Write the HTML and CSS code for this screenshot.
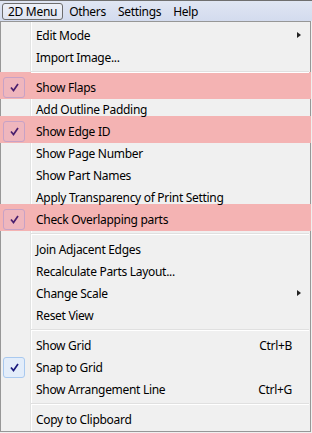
FILE: index.html
```html
<!DOCTYPE html>
<html lang="en">
<head>
    <meta charset="UTF-8">
    <title>2D Menu</title>
    <link rel="stylesheet" href="styles.css">
</head>
<body>
    <div class="menubar">
        <span class="top open">2D Menu</span>
        <span class="top">Others</span>
        <span class="top">Settings</span>
        <span class="top">Help</span>
    </div>
    <div class="popup">
        <div class="item"><span class="mark"></span><span class="label">Edit Mode</span><span class="arrow"></span></div>
        <div class="item"><span class="mark"></span><span class="label">Import Image...</span></div>
        <div class="sep"></div>
        <div class="item flag"><span class="mark box pink"><svg viewBox="0 0 9 9"><path d="M1 4.5 L3.5 7.5 L8 1"/></svg></span><span class="label">Show Flaps</span></div>
        <div class="item"><span class="mark"></span><span class="label">Add Outline Padding</span></div>
        <div class="item flag"><span class="mark box pink"><svg viewBox="0 0 9 9"><path d="M1 4.5 L3.5 7.5 L8 1"/></svg></span><span class="label">Show Edge ID</span></div>
        <div class="item"><span class="mark"></span><span class="label">Show Page Number</span></div>
        <div class="item"><span class="mark"></span><span class="label">Show Part Names</span></div>
        <div class="item"><span class="mark"></span><span class="label">Apply Transparency of Print Setting</span></div>
        <div class="item flag"><span class="mark box pink"><svg viewBox="0 0 9 9"><path d="M1 4.5 L3.5 7.5 L8 1"/></svg></span><span class="label">Check Overlapping parts</span></div>
        <div class="sep"></div>
        <div class="item"><span class="mark"></span><span class="label">Join Adjacent Edges</span></div>
        <div class="item"><span class="mark"></span><span class="label">Recalculate Parts Layout...</span></div>
        <div class="item"><span class="mark"></span><span class="label">Change Scale</span><span class="arrow"></span></div>
        <div class="item"><span class="mark"></span><span class="label">Reset View</span></div>
        <div class="sep"></div>
        <div class="item"><span class="mark"></span><span class="label">Show Grid</span><span class="key">Ctrl+B</span></div>
        <div class="item"><span class="mark box blue"><svg viewBox="0 0 9 9"><path d="M1 4.5 L3.5 7.5 L8 1"/></svg></span><span class="label">Snap to Grid</span></div>
        <div class="item"><span class="mark"></span><span class="label">Show Arrangement Line</span><span class="key">Ctrl+G</span></div>
        <div class="sep"></div>
        <div class="item"><span class="mark"></span><span class="label">Copy to Clipboard</span></div>
    </div>
</body>
</html>
```

FILE: styles.css
```css
body {
    margin: 0;
    background: #f0f0f0;
    font-family: "Noto Sans", sans-serif;
    font-size: 12px;
    letter-spacing: -0.3px;
    color: #000;
}
.menubar {
    height: 20px;
    border-top: 1px solid #6f6f6f;
    background: linear-gradient(#e0e6f3, #d3dbee);
    display: flex;
    align-items: center;
    padding-left: 2px;
}
.top {
    padding: 0 6px;
    line-height: 15px;
}
.top.open {
    padding: 0 5px;
    border: 1px solid #6d6d6d;
    border-radius: 3px;
    background: linear-gradient(#eef1f8, #dfe4f0);
}
.popup {
    position: relative;
    z-index: 0;
    width: 309px;
    border: 1px solid #979797;
    padding: 2px 0 1px;
    background: linear-gradient(to right, #f0f0f0 29px, #e2e3e3 29px 30px, #fff 30px 31px, #f0f0f0 31px);
}
.item {
    position: relative;
    height: 22px;
    display: flex;
    align-items: center;
    padding: 0 9px 0 2px;
}
.flag::before {
    content: "";
    position: absolute;
    top: -4px;
    bottom: -1px;
    left: -1px;
    right: -1px;
    background: #f4b3b3;
    z-index: -1;
}
.mark {
    width: 22px;
    height: 21px;
    box-sizing: border-box;
    display: flex;
    align-items: center;
    justify-content: center;
    flex: none;
}
.box {
    border-radius: 3px;
}
.box svg {
    width: 9px;
    height: 9px;
    fill: none;
    stroke-width: 1.7;
}
.box.pink {
    border: 1px solid #c7a2c6;
    background: #efb6bd;
}
.box.pink svg {
    stroke: #4a1f6e;
}
.box.blue {
    border: 1px solid #a9c9ef;
    background: #e3edfa;
}
.box.blue svg {
    stroke: #1a1a7e;
}
.label {
    margin-left: 11px;
    flex: 1;
    white-space: nowrap;
}
.key {
    margin-right: 9px;
}
.arrow {
    width: 0;
    height: 0;
    border-top: 3.5px solid transparent;
    border-bottom: 3.5px solid transparent;
    border-left: 4px solid #222;
}
.sep {
    height: 0;
    margin: 3px 1px 3px 30px;
    border-top: 1px solid #e0e0e0;
    border-bottom: 1px solid #fff;
}
```
